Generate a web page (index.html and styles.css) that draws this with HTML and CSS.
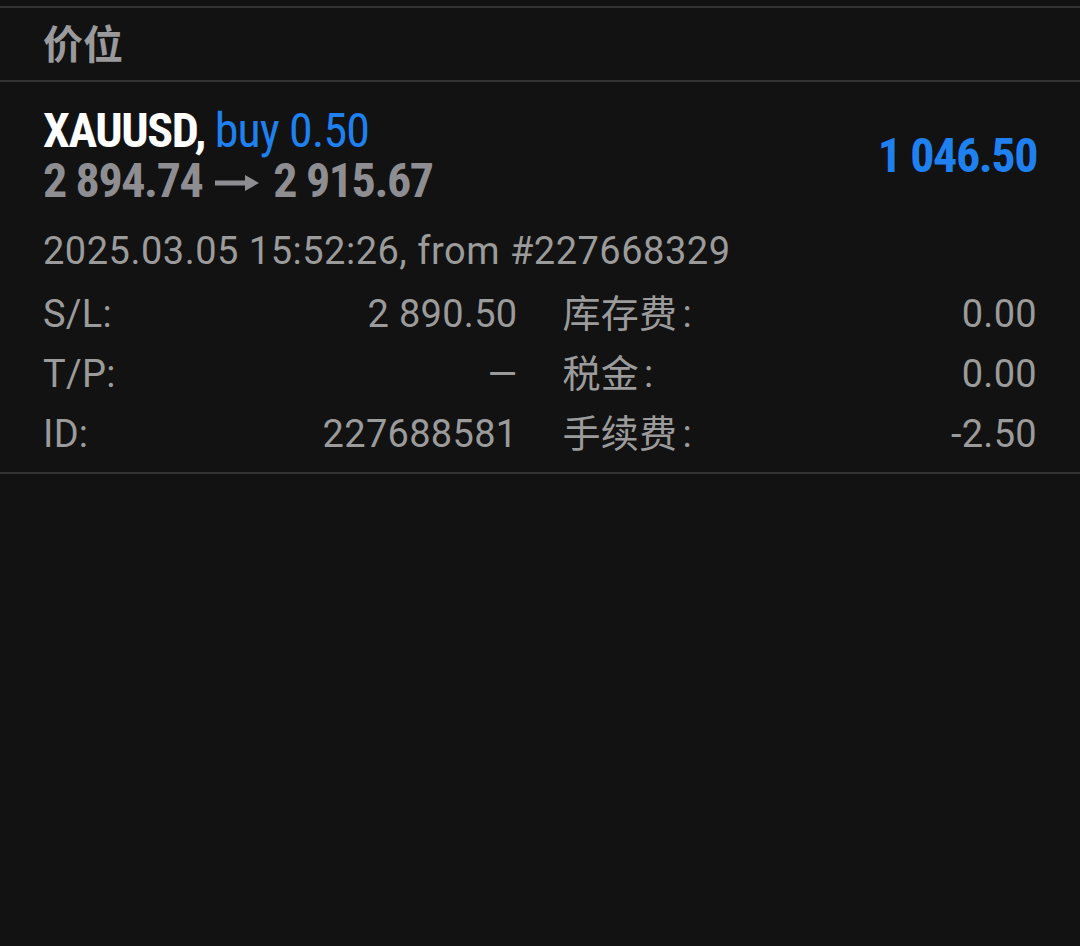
FILE: index.html
```html
<!DOCTYPE html>
<html lang="zh-CN">
<head>
<meta charset="utf-8">
<link rel="stylesheet" href="styles.css">
</head>
<body>
<div class="top-gap"></div>
<div class="section-head">价位</div>
<div class="position">
  <div class="pos-main">
    <div class="pos-left">
      <div class="symbol"><span class="sym">XAUUSD,</span> <span class="side">buy 0.50</span></div>
      <div class="prices"><span>2 894.74</span><svg class="arrow" width="44" height="18" viewBox="0 0 44 18" aria-label="→"><path d="M0 6.5 H30 V1 L44 9 L30 17 V11.5 H0 Z" fill="#8e8e92"/></svg><span>2 915.67</span></div>
    </div>
    <div class="profit">1 046.50</div>
  </div>
  <div class="pos-time">2025.03.05 15:52:26, from #227668329</div>
  <div class="details">
    <div class="cell"><span class="lbl">S/L:</span><span class="val">2 890.50</span></div>
    <div class="cell"><span class="lbl">库存费<span class="colon">:</span></span><span class="val">0.00</span></div>
    <div class="cell"><span class="lbl">T/P:</span><span class="val">—</span></div>
    <div class="cell"><span class="lbl">税金<span class="colon">:</span></span><span class="val">0.00</span></div>
    <div class="cell"><span class="lbl">ID:</span><span class="val">227688581</span></div>
    <div class="cell"><span class="lbl">手续费<span class="colon">:</span></span><span class="val">-2.50</span></div>
  </div>
</div>
</body>
</html>
```
FILE: styles.css
```css
html, body {
  margin: 0;
  padding: 0;
  background: #121212;
  height: 100%;
}
body {
  font-family: Roboto, "Noto Sans CJK SC", sans-serif;
  color: #9b9b9b;
}
.top-gap {
  height: 6px;
  border-bottom: 2px solid #323232;
}
.section-head {
  height: 74px;
  box-sizing: border-box;
  padding: 0 43px 4px;
  display: flex;
  align-items: center;
  font-family: "Noto Sans CJK SC", sans-serif;
  font-weight: 700;
  font-size: 40px;
  color: #9a9a9d;
  border-bottom: 2px solid #323232;
}
.position {
  padding: 0 43px;
  border-bottom: 2px solid #323232;
  height: 392px;
  box-sizing: border-box;
}
.pos-main {
  display: flex;
  justify-content: space-between;
  align-items: center;
  padding-top: 24px;
}
.symbol, .prices, .profit {
  font-family: "Roboto Condensed", "Liberation Sans Narrow", Roboto, sans-serif;
  font-size: 48px;
  line-height: 50px;
  font-weight: 700;
  letter-spacing: -1.4px;
  white-space: nowrap;
}
.sym { color: #ffffff; }
.side { color: #1f80ef; font-weight: 400; letter-spacing: -0.9px; }
.prices {
  color: #8e8e92;
  display: flex;
  align-items: center;
}
.arrow {
  margin: 4px 14px 0 13px;
}
.profit { color: #1f80ef; }
.pos-time {
  font-size: 38px;
  line-height: 40px;
  letter-spacing: 0.5px;
  margin-top: 25px;
  color: #9b9b9b;
}
.details {
  display: grid;
  grid-template-columns: 1fr 1fr;
  column-gap: 45px;
  margin-top: 13px;
}
.cell {
  display: flex;
  justify-content: space-between;
  font-size: 38px;
  line-height: 60px;
  letter-spacing: 0.3px;
}
.colon { margin-left: 5px; }
```
